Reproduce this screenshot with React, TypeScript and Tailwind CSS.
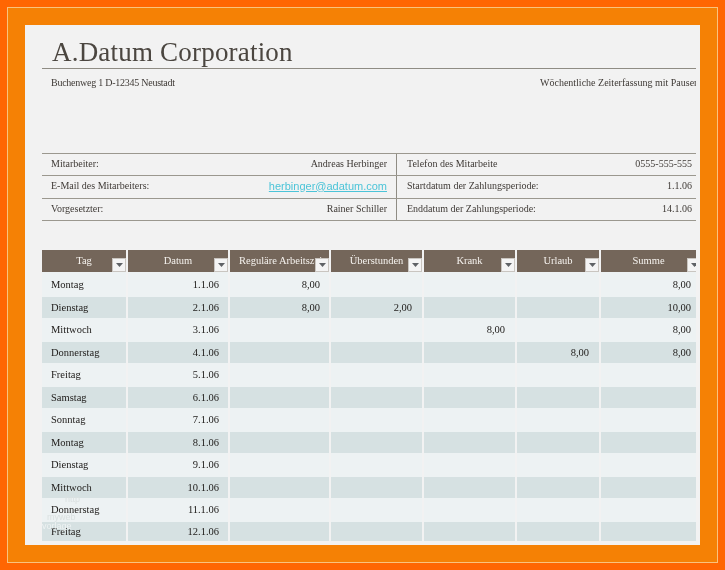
const serif = "font-['Liberation_Serif',serif]";

const cols = "grid grid-cols-[84px_100px_99px_91px_91px_82px_95px] gap-x-[2px]";

const headers = ["Tag", "Datum", "Reguläre Arbeitszeit", "Überstunden", "Krank", "Urlaub", "Summe"];

const rows: [string, string, string, string, string, string, string][] = [
  ["Montag", "1.1.06", "8,00", "", "", "", "8,00"],
  ["Dienstag", "2.1.06", "8,00", "2,00", "", "", "10,00"],
  ["Mittwoch", "3.1.06", "", "", "8,00", "", "8,00"],
  ["Donnerstag", "4.1.06", "", "", "", "8,00", "8,00"],
  ["Freitag", "5.1.06", "", "", "", "", ""],
  ["Samstag", "6.1.06", "", "", "", "", ""],
  ["Sonntag", "7.1.06", "", "", "", "", ""],
  ["Montag", "8.1.06", "", "", "", "", ""],
  ["Dienstag", "9.1.06", "", "", "", "", ""],
  ["Mittwoch", "10.1.06", "", "", "", "", ""],
  ["Donnerstag", "11.1.06", "", "", "", "", ""],
  ["Freitag", "12.1.06", "", "", "", "", ""],
];

const cellPad = ["pl-[9px]", "pr-[9px]", "pr-[9px]", "pr-[10px]", "pr-[10px]", "pr-[10px]", "pr-[5px]"];

function HeaderCell({ label, index }: { label: string; index: number }) {
  return (
    <div className="relative flex h-[22px] items-center justify-center overflow-hidden bg-[#74665a] text-[10.5px] text-[#f5f2ee]">
      {index === 2 ? (
        <span className="w-full overflow-hidden whitespace-nowrap pl-[9px] pr-[14px]">{label}</span>
      ) : (
        <span className="whitespace-nowrap">{label}</span>
      )}
      <span
        className={`absolute bottom-0 flex h-[14px] w-[14px] items-center justify-center border border-[#c9c5c0] bg-[#f4f4f4] ${index === 6 ? "right-[-5px]" : "right-0"}`}
      >
        <svg width="7" height="4" viewBox="0 0 7 4">
          <path d="M0 0H7L3.5 4Z" fill="#5f6266" />
        </svg>
      </span>
    </div>
  );
}

function InfoRow({
  left,
  value,
  right,
  rightValue,
  link,
}: {
  left: string;
  value: string;
  right: string;
  rightValue: string;
  link?: boolean;
}) {
  return (
    <div className="grid h-[22.5px] grid-cols-[354px_1fr] border-b border-[#9b988f] text-[10px] text-[#3f3a36]">
      <div className="flex items-center justify-between pb-[2px] pl-[9px] pr-[9px]">
        <span>{left}</span>
        {link ? (
          <span className="font-['Liberation_Sans',sans-serif] text-[11px] text-[#4cc4d8] underline">{value}</span>
        ) : (
          <span>{value}</span>
        )}
      </div>
      <div className="flex items-center justify-between border-l border-[#8f8c84] pb-[2px] pl-[10px] pr-[4px]">
        <span>{right}</span>
        <span>{rightValue}</span>
      </div>
    </div>
  );
}

export default function App() {
  return (
    <div className={`h-[570px] w-[725px] overflow-hidden bg-[#ff6602] p-[7px] ${serif}`}>
      <div className="h-[556px] w-[711px] border border-[#f9c27e] bg-[#f58105] pt-[17px] pb-[16px] pl-[17px]">
        <div className="relative flex h-[520px] w-[675px] flex-col overflow-hidden bg-[#f2f2f2] pl-[17px] blur-[0.3px]">
          <div className="w-[654px]">
            <div className="h-[44px] border-b border-[#8f8c84] pl-[10px] pt-[9px] text-[27px] leading-[36px] tracking-[0.2px] text-[#4b4640]">
              A.Datum Corporation
            </div>
            <div className="flex justify-between pt-[7px] pl-[9px] text-[10px] leading-[13px] text-[#3f3a36]">
              <span className="tracking-[-0.25px]">Buchenweg 1 D-12345 Neustadt</span>
              <span className="w-[156px] overflow-hidden whitespace-nowrap">Wöchentliche Zeiterfassung mit Pausen</span>
            </div>
            <div className="mt-[63.5px] border-t border-[#9b988f]">
              <InfoRow left="Mitarbeiter:" value="Andreas Herbinger" right="Telefon des Mitarbeite" rightValue="0555-555-555" />
              <InfoRow left="E-Mail des Mitarbeiters:" value="herbinger@adatum.com" right="Startdatum der Zahlungsperiode:" rightValue="1.1.06" link />
              <InfoRow left="Vorgesetzter:" value="Rainer Schiller" right="Enddatum der Zahlungsperiode:" rightValue="14.1.06" />
            </div>
            <div className="mt-[29px]">
              <div className={cols}>
                {headers.map((h, i) => (
                  <HeaderCell key={h} label={h} index={i} />
                ))}
              </div>
              {rows.map((r, i) => {
                const dark = i % 2 === 1;
                const height = i === 0 ? "h-[25px]" : i === 11 ? "h-[19px]" : dark ? "h-[21px]" : "h-[24px]";
                return (
                  <div key={i} className={`${cols} ${height} text-[10.5px] text-[#23211f]`}>
                    {r.map((c, j) => (
                      <div
                        key={j}
                        className={`flex items-center ${j === 0 ? "justify-start" : "justify-end"} ${cellPad[j]} ${dark ? "bg-[#d6e1e2]" : "bg-[#edf2f3]"}`}
                      >
                        {c}
                      </div>
                    ))}
                  </div>
                );
              })}
            </div>
          </div>
          <div className="absolute left-[17px] top-[470px] w-[40px] overflow-hidden font-['Liberation_Sans',sans-serif] text-[9px] leading-[9px]">
            <div className="pl-[23px] text-[#dbe1e1]">http</div>
            <div className="pl-[5px] pt-[9px] whitespace-nowrap text-[#dbe1e1]">myweb</div>
            <div className="whitespace-nowrap text-white/60">vorlage</div>
          </div>
        </div>
      </div>
    </div>
  );
}
